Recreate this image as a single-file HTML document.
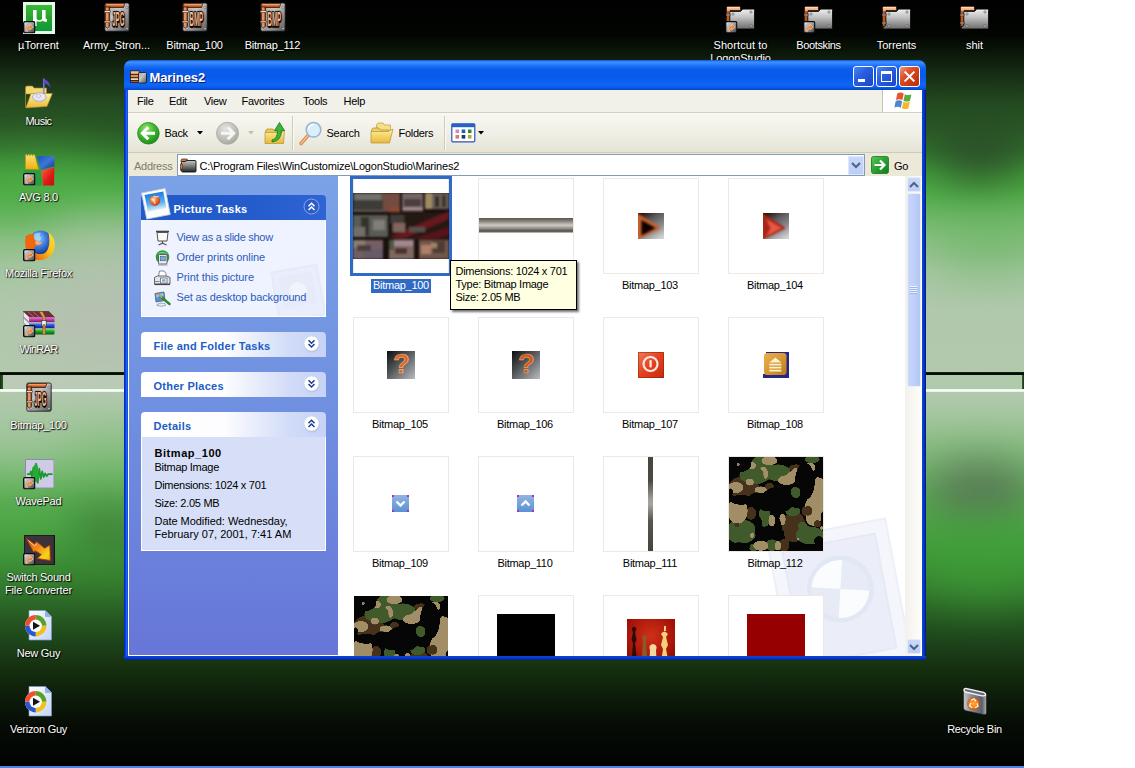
<!DOCTYPE html>
<html>
<head>
<meta charset="utf-8">
<title>Marines2</title>
<style>
*{box-sizing:border-box;margin:0;padding:0}
html,body{width:1135px;height:768px;overflow:hidden;background:#fff}
body{font-family:"Liberation Sans",sans-serif;font-size:11px;letter-spacing:-0.28px;color:#000;position:relative}
.abs{position:absolute}
#desk{position:absolute;left:0;top:0;width:1024px;height:768px;overflow:hidden;background:#000}
#wall{position:absolute;left:0;top:0;width:1024px;height:768px;
 background:linear-gradient(to bottom,#000 0,#020502 35px,#0f1f0d 60px,#1a3217 80px,#22481f 100px,#2a5a26 130px,#30702c 150px,#429e3b 175px,#52ae4a 195px,#6cb665 215px,#8cc086 240px,#a6c6a1 270px,#b1c8ac 310px,#b3c9ae 374px,#b3c9ae 392px,#a6c6a1 412px,#8ec088 440px,#74b86d 470px,#5aac52 500px,#4ba444 530px,#409639 555px,#347c2e 585px,#275c23 615px,#1d441a 642px,#16300f 668px,#0d1d0b 695px,#060c05 725px,#010201 768px)}
.blob{position:absolute;border-radius:50%;filter:blur(22px)}
/* desktop icons */
.di{position:absolute;width:78px;text-align:center;color:#fff;text-shadow:1px 1px 1px #000,0 0 2px rgba(0,0,0,.6);line-height:13px;white-space:nowrap}
.di svg{display:block;margin:0 auto}
/* window */
#win{position:absolute;left:124px;top:60px;width:802px;height:600px;border-radius:8px 8px 0 0;
 background:linear-gradient(to right,#0a22a8 0,#0c40e0 1.500px,#1c62f0 2.500px,#0a50d2 4px,#0a50d2 797px,#0a44d6 798.500px,#0836c4 800px,#03157e 802px)}
#title{position:absolute;left:0;top:0;width:802px;height:30px;border-radius:8px 8px 0 0;
 background:linear-gradient(to bottom,#0b54dc 0,#3f8fff 2px,#2f82fb 4px,#1468f2 7px,#0a5dec 10px,#085ae9 16px,#0a5ef0 20px,#0c66f8 24px,#0a60ee 27px,#064cd2 29px,#0544c0 30px)}
#title .tt{position:absolute;left:25.500px;top:10px;color:#fff;font-weight:bold;font-size:13px;letter-spacing:-0.1px;text-shadow:1px 1px 0 #0a1a6a}
.cb{position:absolute;top:6px;width:21px;height:21px;border:1px solid #fff;border-radius:3px;
 background:linear-gradient(135deg,#4a86f8 0,#2a5ee0 40%,#1a46c8 100%)}
#inner{position:absolute;left:4px;top:30px;width:794px;height:566px;background:#ece9d8;overflow:hidden}
#menu{position:absolute;left:0;top:0;width:794px;height:23px;background:#f2f1e9;border-bottom:1px solid #d4d0c0}
#menu span{position:absolute;top:5px}
#tool{position:absolute;left:0;top:23px;width:794px;height:40px;background:linear-gradient(to bottom,#f8f7f1 0,#f0efe6 55%,#e5e3d5 100%);border-bottom:1px solid #cfcbb8}
#addr{position:absolute;left:0;top:63px;width:794px;height:23px;background:#ece9d8}
#pane{position:absolute;left:1px;top:86px;width:209px;height:479px;background:linear-gradient(to bottom,#7ba2e7 0,#6f8fe0 50%,#6776d8 100%)}
#files{position:absolute;left:210px;top:86px;width:584px;height:480px;background:#fff;overflow:hidden}

.ph{position:absolute;left:12px;width:185px;height:25px;border-radius:4px 4px 0 0;background:linear-gradient(to right,#fff 0,#fdfdff 45%,#d2dcf8 80%,#c6d3f7 100%);color:#215dc6;font-weight:bold;letter-spacing:-0.1px}
.ph span{position:absolute;left:12.500px;top:7.500px}
.chev{position:absolute;left:162px;top:3px}
.pb{position:absolute;left:12px;width:185px;border:1px solid #fff;border-top:0}
.lnk{position:absolute;left:34.500px;color:#2a5abc;white-space:nowrap}
.dt{position:absolute;left:12.500px;white-space:nowrap}

.tb{position:absolute;width:96px;height:96px;border:1px solid #eae9e3;background:#fff}
.tl{position:absolute;width:118px;text-align:center;white-space:nowrap;line-height:13px}
.ph{letter-spacing:.25px}
</style>
</head>
<body>
<div id="desk">
 <div id="wall"></div>
 <div class="blob" style="left:-50px;top:150px;width:170px;height:70px;background:#4fae46;opacity:.5"></div>
 <div class="blob" style="left:40px;top:215px;width:120px;height:70px;background:#b4c6b0;opacity:.55"></div>
 <div class="blob" style="left:30px;top:270px;width:150px;height:100px;background:#b8bcb4;opacity:.6"></div>
 <div class="blob" style="left:935px;top:128px;width:90px;height:55px;background:#2a3f28;opacity:.75"></div>
 <div class="blob" style="left:930px;top:215px;width:120px;height:60px;background:#5cb054;opacity:.45"></div>
 <div class="blob" style="left:925px;top:462px;width:110px;height:55px;background:#566654;opacity:.8"></div>
 <div class="blob" style="left:915px;top:520px;width:140px;height:80px;background:#3fa238;opacity:.6"></div>
 <div class="blob" style="left:70px;top:505px;width:80px;height:50px;background:#2c5229;opacity:.45"></div>
 <div class="blob" style="left:-50px;top:395px;width:130px;height:70px;background:#b4cab0;opacity:.45"></div>
 <div class="abs" style="left:0;top:372px;width:1024px;height:3px;background:linear-gradient(to bottom,#1c301a,#020802 40%,#0a160a)"></div>
 <div class="abs" style="left:0;top:375px;width:1024px;height:14px;background:linear-gradient(to right,#bccbb8 0,#b9cab5 120px,#b1c9ad 930px,#b0caac 1024px)"></div>
 <div class="abs" style="left:0;top:389px;width:1024px;height:3px;background:linear-gradient(to bottom,#e8f6e6,#f8fff8,#e0f0de)"></div>
 <div class="abs" style="left:0;top:375px;width:3px;height:14px;background:linear-gradient(to right,#16300f,#2c5a24)"></div>
 <div class="abs" style="left:1021.500px;top:375px;width:2.500px;height:14px;background:linear-gradient(to right,#3a6a30,#16300f)"></div>
 <svg width="0" height="0" style="position:absolute">
<defs>
<linearGradient id="gMetal" x1="0" y1="0" x2="1" y2="1"><stop offset="0" stop-color="#a8a8a8"/><stop offset=".4" stop-color="#c6c6c6"/><stop offset=".7" stop-color="#8e8e8e"/><stop offset="1" stop-color="#585858"/></linearGradient>
<linearGradient id="gFold" x1="0" y1="0" x2="0" y2="1"><stop offset="0" stop-color="#eef2f4"/><stop offset=".45" stop-color="#bcbcbc"/><stop offset="1" stop-color="#6c6c6c"/></linearGradient>
<linearGradient id="gFoldD" x1="0" y1="0" x2="0" y2="1"><stop offset="0" stop-color="#c8c8c8"/><stop offset=".45" stop-color="#808080"/><stop offset="1" stop-color="#242424"/></linearGradient>
<linearGradient id="gPipe" x1="0" y1="0" x2="1" y2="0"><stop offset="0" stop-color="#c8602a"/><stop offset=".4" stop-color="#f4a878"/><stop offset="1" stop-color="#8a3810"/></linearGradient>
<linearGradient id="gPipeH" x1="0" y1="0" x2="0" y2="1"><stop offset="0" stop-color="#f8c8a0"/><stop offset=".45" stop-color="#e87a3a"/><stop offset="1" stop-color="#8a3810"/></linearGradient>
<linearGradient id="gSc" x1="0" y1="0" x2="1" y2="1"><stop offset="0" stop-color="#e4e4e4"/><stop offset=".5" stop-color="#9c9c9c"/><stop offset="1" stop-color="#4a4a4a"/></linearGradient>
<linearGradient id="gUt" x1="0" y1="0" x2="0" y2="1"><stop offset="0" stop-color="#3cb83a"/><stop offset=".5" stop-color="#25a42c"/><stop offset="1" stop-color="#0c9a3a"/></linearGradient>
<linearGradient id="gYF" x1="0" y1="0" x2="0" y2="1"><stop offset="0" stop-color="#fff0a0"/><stop offset="1" stop-color="#e8b83a"/></linearGradient>
<radialGradient id="gFx" cx=".4" cy=".35" r=".7"><stop offset="0" stop-color="#9ad0ff"/><stop offset=".5" stop-color="#3a7ad8"/><stop offset="1" stop-color="#142a88"/></radialGradient>
<linearGradient id="gCan" x1="0" y1="0" x2="1" y2="0"><stop offset="0" stop-color="#c8c8cc"/><stop offset=".35" stop-color="#8a8a92"/><stop offset=".8" stop-color="#5a5e68"/><stop offset="1" stop-color="#b0b0b0"/></linearGradient>
<radialGradient id="gRec" cx=".5" cy=".5" r=".5"><stop offset="0" stop-color="#ffb040"/><stop offset=".7" stop-color="#f07818"/><stop offset="1" stop-color="#c04808" stop-opacity=".6"/></radialGradient>
<linearGradient id="gPg" x1="0" y1="0" x2="1" y2="1"><stop offset="0" stop-color="#fff"/><stop offset="1" stop-color="#c4d4f4"/></linearGradient>

<symbol id="sc" viewBox="0 0 12 12"><rect x="0" y="0" width="12" height="12" rx="2" fill="#0c0c0c"/><rect x="1.300" y="1.300" width="9.400" height="9.400" rx=".8" fill="url(#gSc)"/><path d="M3 9.800C2.800 6.600 4.300 5 6.600 4.900V3L9.800 5.800 6.600 8.500V6.900C5.200 6.900 4.300 7.900 4.600 9.800Z" fill="#f57e2a" stroke="#ffe0c0" stroke-width=".5"/></symbol>

<symbol id="ifile" viewBox="0 0 26 30">
 <rect x=".8" y="1" width="24.400" height="28.200" rx="1.500" fill="url(#gMetal)" stroke="#101010" stroke-width=".8"/>
 <path d="M1.300 5.500V3.300Q1.300 1.500 3.300 1.500H20.800L19.500 5.500Z" fill="url(#gPipeH)" stroke="#2a1004" stroke-width=".7"/>
 <path d="M1.300 5H5.600V24.300L3.500 26 1.300 24.500Z" fill="url(#gPipe)" stroke="#2a1004" stroke-width=".7"/>
 <rect x=".3" y="8.800" width="5.900" height="1.700" fill="#fbe6d6" stroke="#2a1004" stroke-width=".5"/>
 <rect x=".3" y="19" width="5.900" height="1.700" fill="#fbe6d6" stroke="#2a1004" stroke-width=".5"/>
 <circle cx="23" cy="5.500" r="1" fill="#fafafa" stroke="#333" stroke-width=".5"/><circle cx="23" cy="26.500" r="1" fill="#fafafa" stroke="#333" stroke-width=".5"/><circle cx="5" cy="26.500" r="1" fill="#fafafa" stroke="#333" stroke-width=".5"/>
</symbol>

<symbol id="ifold" viewBox="0 0 29 23.500" preserveAspectRatio="none">
 <path d="M.5 21V1.800Q.5.400 2 .400H14.200L14.800 4.600H4V19Z" fill="url(#gPipeH)" stroke="#2a0e02" stroke-width=".7"/>
 <rect x="1.200" y=".900" width="12.600" height="1.300" fill="#ffd8b8"/>
 <rect x=".900" y="5" width="2.600" height="15" fill="#b45a22"/>
 <path d="M3.800 6.200Q3.800 5.400 4.600 5.400H14.500L16.700 3.100H27.400Q28.500 3.100 28.500 4.200V21.900Q28.500 23 27.400 23H2L.800 21.700 3.800 19.200Z" fill="url(#gFold)" stroke="#0c0c0c" stroke-width=".9"/>
 <rect x="0" y="8.200" width="4.100" height="1.600" fill="#fff4ea" stroke="#1a0c04" stroke-width=".5"/><rect x="0" y="16.200" width="4.100" height="1.600" fill="#fff4ea" stroke="#1a0c04" stroke-width=".5"/>
 <circle cx="7" cy="8" r="1.100" fill="#fff" stroke="#3a3a3a" stroke-width=".6"/><circle cx="25" cy="6" r="1.100" fill="#fff" stroke="#3a3a3a" stroke-width=".6"/><circle cx="25" cy="20" r="1.100" fill="#fff" stroke="#3a3a3a" stroke-width=".6"/><circle cx="7" cy="20" r="1.100" fill="#fff" stroke="#3a3a3a" stroke-width=".6"/>
</symbol>

<symbol id="iut" viewBox="0 0 32 32"><rect x="0" y="0" width="32" height="32" fill="#e4fbe8"/><rect x="3" y="3" width="26" height="26" fill="url(#gUt)"/><path d="M10 8h3.600v8.400q0 1.800 2.700 1.800t2.700-1.800V8h3.600v8.300q0 .9 1.400.7v2.700q-2.800.6-4.200-1q-1.400 1-3.300 1q-1.700 0-2.900-.6V24H10Z" fill="#fff"/></symbol>

<symbol id="imusic" viewBox="0 0 32 32">
 <path d="M2.500 29.500V9.500Q2.500 8 4 8H9.500L11 10H23.500V16H2.500Z" fill="#f2d872" stroke="#a88420" stroke-width=".6"/>
 <path d="M2.800 30L8 15.500H29.400L24 28.500Z" fill="url(#gYF)" stroke="#a88420" stroke-width=".6"/>
 <ellipse cx="16.300" cy="19" rx="6.800" ry="4.300" fill="#e6e6f6" stroke="#9a9ab8" stroke-width=".7"/><ellipse cx="15.500" cy="18" rx="2.200" ry="1.300" fill="#fff" stroke="#8a8aa8" stroke-width=".5"/>
 <path d="M20.800 .500V15" stroke="#8a7ae8" stroke-width="1.400"/><path d="M20.800 1Q27 3 27.500 10Q25 5.800 20.800 5.800Z" fill="#5848c8"/>
</symbol>

<symbol id="iavg" viewBox="0 0 32 32">
 <defs><linearGradient id="gAy" x1="0" y1="0" x2="0" y2="1"><stop offset="0" stop-color="#f8e070"/><stop offset="1" stop-color="#f4b010"/></linearGradient><linearGradient id="gAb" x1="0" y1="0" x2="1" y2="1"><stop offset="0" stop-color="#1c50c0"/><stop offset=".5" stop-color="#3a78d8"/><stop offset="1" stop-color="#16308a"/></linearGradient><linearGradient id="gAvr" x1="0" y1="0" x2="1" y2="1"><stop offset="0" stop-color="#f8683a"/><stop offset=".6" stop-color="#e01818"/><stop offset="1" stop-color="#c01010"/></linearGradient></defs>
 <path d="M2.500 15.200V.600h1.400v1h1v-1h1.600v1h1v-1h1.600v1h1v-1h1.500L15.600 15.200Z" fill="url(#gAy)" stroke="#c89010" stroke-width=".4"/>
 <path d="M14 2.200H31.400V12.200L18 15.900Z" fill="url(#gAb)"/>
 <path d="M1.800 15.900L17.400 16.400 19.500 31.400H1.800Z" fill="#2c9c3c"/>
 <path d="M18.200 16.800L31.400 13.300 31 31.400H20.200Z" fill="url(#gAvr)"/>
</symbol>

<symbol id="ifx" viewBox="0 0 32 32">
 <defs><linearGradient id="gFt" x1="1" y1="0" x2="0" y2="1"><stop offset="0" stop-color="#ffe040"/><stop offset=".45" stop-color="#fcc018"/><stop offset=".75" stop-color="#f07a10"/><stop offset="1" stop-color="#d83410"/></linearGradient></defs>
 <circle cx="17.500" cy="13.500" r="12" fill="url(#gFx)"/>
 <path d="M10 6q3-3 8-2q-2 1.500-1 3.500q2 2 0 4q-3 1-5.500-1q-2.500-2-1.500-4.500Z" fill="#a8dcff" opacity=".7"/>
 <path d="M25.500 3.500Q33 9 31.500 19Q29 29.500 18 31Q9 31.500 4.500 25.500L8.500 20.500Q13 27 21 24.500Q28.500 20 25.500 3.500Z" fill="url(#gFt)"/>
 <path d="M2.500 7.500Q6 4 11.500 5.500Q10 9 12.500 11.500L19 13.500Q17.500 16.500 13.500 16Q10 18.500 12 22L5 26Q1 18 2.500 7.500Z" fill="#f0680e"/>
 <path d="M12.500 11.500l6.500 2q-1.500 2.500-5 2.500q-2.500-1-1.500-4.500Z" fill="#ffc89a" opacity=".7"/>
</symbol>

<symbol id="irar" viewBox="0 0 32 24">
 <defs><linearGradient id="gR1" x1="0" y1="0" x2="0" y2="1"><stop offset="0" stop-color="#f07ad8"/><stop offset=".35" stop-color="#d848b8"/><stop offset="1" stop-color="#7a1c68"/></linearGradient><linearGradient id="gR2" x1="0" y1="0" x2="0" y2="1"><stop offset="0" stop-color="#5a88ff"/><stop offset=".4" stop-color="#2a50e0"/><stop offset="1" stop-color="#10208a"/></linearGradient><linearGradient id="gR3" x1="0" y1="0" x2="0" y2="1"><stop offset="0" stop-color="#50d858"/><stop offset=".4" stop-color="#1ea828"/><stop offset="1" stop-color="#0a5a12"/></linearGradient></defs>
 <path d="M.300 .500H25.800L31.500 6.300H6.500Z" fill="#6e3038" stroke="#2a1014" stroke-width=".5"/><path d="M5 .800L11 6M10 .800L16 6" stroke="#b86a60" stroke-width="1"/>
 <path d="M.300 .500L6.500 6.300V11L.300 5.700Z" fill="#f4e4ee" stroke="#4a3a44" stroke-width=".4"/>
 <rect x="6.500" y="6.300" width="25" height="4.800" fill="url(#gR1)"/>
 <path d="M.300 6.700L6.500 12.500V17L.300 11.800Z" fill="#e8e8f4" stroke="#3a3a4a" stroke-width=".4"/>
 <rect x="6.500" y="12.400" width="25" height="4.800" fill="url(#gR2)"/>
 <path d="M6.500 17.500l5.500 1V23.400L6.500 19Z" fill="#dde"/>
 <rect x="12" y="18.300" width="19.500" height="5.100" rx="1" fill="url(#gR3)"/>
 <path d="M16 .500h3.500l2.800 5.800V23.400H19.800V6.500Z" fill="#d89a50" stroke="#6a4010" stroke-width=".4"/>
 <rect x="18.800" y="9.500" width="4.400" height="5.500" fill="#f0f0f0" stroke="#222" stroke-width=".6"/><rect x="20" y="13" width="2.200" height="5" fill="#c07828"/>
</symbol>

<symbol id="iwave" viewBox="0 0 30 31" preserveAspectRatio="none">
 <rect x=".5" y=".5" width="29" height="30" fill="#cfcbe6" stroke="#8c88b0"/>
 <path d="M2 16h3l1-3 1 6 1.500-10 1.500 14 1.500-18 1.500 20 1.500-15 1.500 11 1.500-8 1.500 6 1.500-4 1.500 3 1.500-2H28" fill="none" stroke="#1a9a28" stroke-width="1.800" stroke-linejoin="round"/>
 <path d="M8 9l3-5 2 4 1 9-2 8-2-4-2-6Z" fill="#28a834"/>
</symbol>

<symbol id="isw" viewBox="0 0 31 30.400">
 <defs><linearGradient id="gSw" x1="0" y1="0" x2="1" y2="1"><stop offset="0" stop-color="#e8480c"/><stop offset=".45" stop-color="#f48a18"/><stop offset=".8" stop-color="#f8d41c"/><stop offset="1" stop-color="#f0b010"/></linearGradient></defs>
 <rect x="0" y="0" width="31" height="30.400" fill="#1c1418"/><rect x=".8" y=".8" width="29" height="28.400" fill="#3c333a"/>
 <path d="M2.300 3.400L10.200 9.100 12.800 6.800 20.600 13.300 25.800 10.200 26.300 25.500 13.300 23.400 17.400 19.500 11.700 15.900 9.600 16.900Z" fill="url(#gSw)" stroke="#b04008" stroke-width=".8"/>
 <path d="M4.500 5.500L10.500 11 12.800 9" stroke="#ffd8b0" stroke-width="1" fill="none"/>
</symbol>

<symbol id="iwmp" viewBox="0 0 30 31">
 <path d="M5 .500h16.500l6 6v23.500H5Z" fill="url(#gPg)" stroke="#7a94c8" stroke-width=".7"/><path d="M21.500 .500v6h6Z" fill="#8ab4e8" stroke="#7a94c8" stroke-width=".5"/>
 <circle cx="11.700" cy="15.800" r="10.700" fill="#f0f4fc"/>
 <path d="M11.700 15.800V5.100A10.700 10.700 0 0 1 22.400 15.800Z" fill="#5aa028"/><path d="M11.700 15.800H22.400A10.700 10.700 0 0 1 11.700 26.500Z" fill="#f0c020"/><path d="M11.700 15.800V26.500A10.700 10.700 0 0 1 1 15.800Z" fill="#2a56d0"/><path d="M11.700 15.800H1A10.700 10.700 0 0 1 11.700 5.100Z" fill="#ec5030"/>
 <circle cx="11.700" cy="15.800" r="6.200" fill="#f8fafe"/><path d="M9 11.800v8l7-4Z" fill="#141414"/>
</symbol>

<symbol id="ibin" viewBox="0 0 26 30">
 <path d="M1.500 4.500Q1 1.500 4 1.500L22 5.500Q24.500 6.500 24.500 9V26.500Q24.500 29 22 28.500L4 24.500Q1.500 24 1.500 21.500Z" fill="url(#gCan)" stroke="#1a1a1a" stroke-width=".6"/>
 <path d="M2 4Q2 2 4.500 2.300L21.500 6Q24 7 23.500 9Q22 10 19 9.300L4.500 6Q2 5.500 2 4Z" fill="#6a6e78" stroke="#f4f4f4" stroke-width="1.300"/>
 <circle cx="11.500" cy="17.500" r="6.500" fill="url(#gRec)"/>
 <path d="M9 14l3-1.500 2 2.500M15 17l1 3-3 1.500M10 21.500l-2.500-2 1.500-3" fill="none" stroke="#fff0d8" stroke-width="1.300"/>
</symbol>
</defs>
</svg>

 <div class="di" style="left:-0.5px;top:2px;letter-spacing:0.05px"><div style="position:relative;width:32px;height:32px;margin:0 auto 5px"><svg class="abs" style="left:0px;top:0px" width="32" height="32"><use href="#iut"/></svg><svg class="abs" style="left:.5px;top:19px" width="12.500" height="12.500"><use href="#sc"/></svg></div>µTorrent</div>
 <div class="di" style="left:77.5px;top:2px;letter-spacing:0px"><div style="position:relative;width:32px;height:32px;margin:0 auto 5px"><svg class="abs" style="left:3px;top:0px" width="26" height="30" viewBox="0 0 26 30"><use href="#ifile"/><text x="0" y="0" transform="translate(14.3,23.5) scale(.315,1)" text-anchor="middle" font-family="Liberation Sans,sans-serif" font-weight="bold" font-size="19.5" letter-spacing="0" fill="#f6b890" stroke="#2a1408" stroke-width="1.800" paint-order="stroke">JPG</text></svg></div>Army_Stron...</div>
 <div class="di" style="left:155.5px;top:2px;letter-spacing:-0.24px"><div style="position:relative;width:32px;height:32px;margin:0 auto 5px"><svg class="abs" style="left:3px;top:0px" width="26" height="30" viewBox="0 0 26 30"><use href="#ifile"/><text x="0" y="0" transform="translate(14.3,23.5) scale(.315,1)" text-anchor="middle" font-family="Liberation Sans,sans-serif" font-weight="bold" font-size="19.5" letter-spacing="0" fill="#f6b890" stroke="#2a1408" stroke-width="1.800" paint-order="stroke">BMP</text></svg></div>Bitmap_100</div>
 <div class="di" style="left:233.5px;top:2px;letter-spacing:-0.24px"><div style="position:relative;width:32px;height:32px;margin:0 auto 5px"><svg class="abs" style="left:3px;top:0px" width="26" height="30" viewBox="0 0 26 30"><use href="#ifile"/><text x="0" y="0" transform="translate(14.3,23.5) scale(.315,1)" text-anchor="middle" font-family="Liberation Sans,sans-serif" font-weight="bold" font-size="19.5" letter-spacing="0" fill="#f6b890" stroke="#2a1408" stroke-width="1.800" paint-order="stroke">BMP</text></svg></div>Bitmap_112</div>
 <div class="di" style="left:701.5px;top:2px;letter-spacing:0.07px"><div style="position:relative;width:32px;height:32px;margin:0 auto 5px"><svg class="abs" style="left:1px;top:3.500px" width="29" height="23.500"><use href="#ifold"/></svg><svg class="abs" style="left:.5px;top:19px" width="12.500" height="12.500"><use href="#sc"/></svg></div>Shortcut to<br><span style="letter-spacing:-0.1px">LogonStudio</span></div>
 <div class="di" style="left:779.5px;top:2px;letter-spacing:-0.37px"><div style="position:relative;width:32px;height:32px;margin:0 auto 5px"><svg class="abs" style="left:1px;top:3.500px" width="29" height="23.500"><use href="#ifold"/></svg><svg class="abs" style="left:.5px;top:19px" width="12.500" height="12.500"><use href="#sc"/></svg></div>Bootskins</div>
 <div class="di" style="left:857.5px;top:2px;letter-spacing:-0.04px"><div style="position:relative;width:32px;height:32px;margin:0 auto 5px"><svg class="abs" style="left:1px;top:3.500px" width="29" height="23.500"><use href="#ifold"/></svg></div>Torrents</div>
 <div class="di" style="left:935.5px;top:2px;letter-spacing:0px"><div style="position:relative;width:32px;height:32px;margin:0 auto 5px"><svg class="abs" style="left:1px;top:3.500px" width="29" height="23.500"><use href="#ifold"/></svg></div>shit</div>
 <div class="di" style="left:-0.5px;top:78px;letter-spacing:-0.54px"><div style="position:relative;width:32px;height:32px;margin:0 auto 5px"><svg class="abs" style="left:0px;top:0px" width="32" height="32"><use href="#imusic"/></svg></div>Music</div>
 <div class="di" style="left:-0.5px;top:154px;letter-spacing:-0.26px"><div style="position:relative;width:32px;height:32px;margin:0 auto 5px"><svg class="abs" style="left:0px;top:0px" width="32" height="32"><use href="#iavg"/></svg><svg class="abs" style="left:.5px;top:19px" width="12.500" height="12.500"><use href="#sc"/></svg></div>AVG 8.0</div>
 <div class="di" style="left:-0.5px;top:230px;letter-spacing:-0.26px"><div style="position:relative;width:32px;height:32px;margin:0 auto 5px"><svg class="abs" style="left:0px;top:-1px" width="32" height="32"><use href="#ifx"/></svg><svg class="abs" style="left:.5px;top:19px" width="12.500" height="12.500"><use href="#sc"/></svg></div>Mozilla Firefox</div>
 <div class="di" style="left:-0.5px;top:306px;letter-spacing:-0.7px"><div style="position:relative;width:32px;height:32px;margin:0 auto 5px"><svg class="abs" style="left:.5px;top:4.500px" width="32" height="24"><use href="#irar"/></svg><svg class="abs" style="left:.5px;top:19px" width="12.500" height="12.500"><use href="#sc"/></svg></div>WinRAR</div>
 <div class="di" style="left:-0.5px;top:382px;letter-spacing:-0.24px"><div style="position:relative;width:32px;height:32px;margin:0 auto 5px"><svg class="abs" style="left:3px;top:0px" width="26" height="30" viewBox="0 0 26 30"><use href="#ifile"/><text x="0" y="0" transform="translate(14.3,23.5) scale(.315,1)" text-anchor="middle" font-family="Liberation Sans,sans-serif" font-weight="bold" font-size="19.5" letter-spacing="0" fill="#f6b890" stroke="#2a1408" stroke-width="1.800" paint-order="stroke">JPG</text></svg></div>Bitmap_100</div>
 <div class="di" style="left:-0.5px;top:458px;letter-spacing:-0.19px"><div style="position:relative;width:32px;height:32px;margin:0 auto 5px"><svg class="abs" style="left:2px;top:1px" width="29.500" height="29.500"><use href="#iwave"/></svg><svg class="abs" style="left:.5px;top:19px" width="12.500" height="12.500"><use href="#sc"/></svg></div>WavePad</div>
 <div class="di" style="left:-0.5px;top:534px;letter-spacing:-0.275px"><div style="position:relative;width:32px;height:32px;margin:0 auto 5px"><svg class="abs" style="left:1px;top:1px" width="31" height="30.400"><use href="#isw"/></svg><svg class="abs" style="left:.5px;top:19px" width="12.500" height="12.500"><use href="#sc"/></svg></div>Switch Sound<br><span style="letter-spacing:-0.15px">File Converter</span></div>
 <div class="di" style="left:-0.5px;top:610px;letter-spacing:-0.26px"><div style="position:relative;width:32px;height:32px;margin:0 auto 5px"><svg class="abs" style="left:1px;top:0px" width="30" height="31"><use href="#iwmp"/></svg></div>New Guy</div>
 <div class="di" style="left:-0.5px;top:686px;letter-spacing:-0.26px"><div style="position:relative;width:32px;height:32px;margin:0 auto 5px"><svg class="abs" style="left:1px;top:0px" width="30" height="31"><use href="#iwmp"/></svg></div>Verizon Guy</div>
 <div class="di" style="left:935.5px;top:686px;letter-spacing:-0.31px"><div style="position:relative;width:32px;height:32px;margin:0 auto 5px"><svg class="abs" style="left:3px;top:0px" width="26" height="30.500"><use href="#ibin"/></svg></div>Recycle Bin</div>
 <div id="win">
  <div id="title">
   <svg class="abs" style="left:6px;top:8.500px" width="17" height="16" viewBox="0 0 17 16">
    <rect x="0" y="1.500" width="9.500" height="12.500" rx="1" fill="#2a160c"/>
    <rect x=".8" y="2.200" width="8" height="2.600" fill="#f0c29a"/><rect x=".8" y="5.800" width="8" height="2.400" fill="#ec8a4a"/><rect x=".8" y="9.200" width="8" height="1.800" fill="#e8d8c4"/><rect x=".8" y="11.800" width="8" height="1.400" fill="#b05a28"/>
    <rect x="8.500" y="3.500" width="8" height="10.500" rx="1" fill="url(#gMetal)" stroke="#181818" stroke-width=".8"/>
   </svg>
   <div class="tt">Marines2</div>
   <div class="cb" style="left:729px"><div class="abs" style="left:4px;top:12px;width:7px;height:3px;background:#fff"></div></div>
   <div class="cb" style="left:752px"><div class="abs" style="left:4px;top:4px;width:11px;height:11px;border:1px solid #fff;border-top-width:3px"></div></div>
   <div class="cb" style="left:775px;background:linear-gradient(135deg,#f09878 0,#e0502a 35%,#c83a14 70%,#b83010 100%)"><svg class="abs" style="left:0;top:0" width="19" height="19" viewBox="0 0 19 19"><path d="M5.300 5.300l8.400 8.400M13.700 5.300l-8.400 8.400" stroke="#fff" stroke-width="2" stroke-linecap="square"/></svg></div>
  </div>
  <div class="abs" style="left:0;top:596px;width:802px;height:4px;background:linear-gradient(to bottom,#0a48dc 0,#0838c8 2px,#041e92 4px)"></div>
  <div id="inner">
   <div id="menu"><span style="left:9px">File</span><span style="left:41px">Edit</span><span style="left:76px">View</span><span style="left:113.500px">Favorites</span><span style="left:175px">Tools</span><span style="left:215.500px">Help</span>
    <div class="abs" style="left:754px;top:0;width:40px;height:22px;background:#fff;border-left:1px solid #c8c4b4"></div>
    <svg class="abs" style="left:764.500px;top:1px" width="23" height="20" viewBox="0 0 20 18">
     <path d="M3.500 2.200Q6.500 .6 9.300 2.400L8.100 8.200Q5.300 6.600 2.300 8Z" fill="#e8542c"/>
     <path d="M10.300 2.900Q13.200 4.400 16.200 2.900L15 8.700Q12 10.200 9.100 8.700Z" fill="#5aac3a"/>
     <path d="M2.100 9Q5.100 7.600 7.900 9.200L6.700 15Q3.900 13.400.9 14.800Z" fill="#4a86d8"/>
     <path d="M8.900 9.700Q11.800 11.200 14.800 9.700L13.600 15.500Q10.600 17 7.700 15.500Z" fill="#f4b82a"/>
    </svg></div>
   <div id="tool"><svg class="abs" style="left:8px;top:8px" width="25" height="25" viewBox="0 0 25 25">
     <defs><radialGradient id="gBk" cx=".4" cy=".3" r=".75"><stop offset="0" stop-color="#9ae878"/><stop offset=".45" stop-color="#46bc32"/><stop offset="1" stop-color="#1a861a"/></radialGradient>
     <radialGradient id="gFw" cx=".4" cy=".3" r=".75"><stop offset="0" stop-color="#e4e4e0"/><stop offset=".6" stop-color="#c0c0ba"/><stop offset="1" stop-color="#a4a49c"/></radialGradient></defs>
     <circle cx="12.400" cy="12.300" r="10.800" fill="url(#gBk)" stroke="#2a8a24" stroke-width=".8"/>
     <path d="M12.300 6.300L6.300 12.300l6 6M7 12.300H19" fill="none" stroke="#fff" stroke-width="3" stroke-linejoin="miter"/>
    </svg>
    <span class="abs" style="left:36.500px;top:14px">Back</span>
    <svg class="abs" style="left:69px;top:18px" width="6" height="4"><path d="M0 0h6L3 3.500Z" fill="#000"/></svg>
    <svg class="abs" style="left:86.500px;top:8px" width="25" height="25" viewBox="0 0 25 25">
     <circle cx="12.500" cy="12.300" r="11" fill="url(#gFw)" stroke="#a8a8a0" stroke-width=".8"/>
     <path d="M12.700 6.300l6 6-6 6M18 12.300H6" fill="none" stroke="#f6f6f2" stroke-width="3" stroke-linejoin="miter"/>
    </svg>
    <svg class="abs" style="left:120px;top:18px" width="6" height="4"><path d="M0 0h6L3 3.500Z" fill="#c4c0b0"/></svg>
    <svg class="abs" style="left:136px;top:7px" width="22" height="25" viewBox="0 0 22 25">
     <path d="M1.500 11l1.500-2h6l1.500 2h9v3H1.500Z" fill="#e8c85a" stroke="#b08a20" stroke-width=".7"/>
     <path d="M1 23.500V12.500h17l2.500-2.500-1 13.500Z" fill="url(#gYF)" stroke="#b8902c" stroke-width=".7"/>
     <path d="M8 20Q13.500 19 13.500 10.500H10.500L15.500 2.500 20.500 10.500H17.500Q17.500 21 8 22Z" fill="#3cb43a" stroke="#1a7a1c" stroke-width=".8"/>
    </svg>
    <div class="abs" style="left:164px;top:3px;width:1px;height:34px;background:#cfcbb8"></div><div class="abs" style="left:165px;top:3px;width:1px;height:34px;background:#fbfaf4"></div>
    <svg class="abs" style="left:170px;top:8px" width="25" height="25" viewBox="0 0 25 25">
     <path d="M3 22.500l8-9" stroke="#d88a4a" stroke-width="3.400" stroke-linecap="round"/><path d="M3 22.500l8-9" stroke="#f4c49a" stroke-width="1.200" stroke-linecap="round"/>
     <circle cx="15.500" cy="8.800" r="7.300" fill="#d8f0fc" stroke="#9ab4d0" stroke-width="1.500"/><path d="M10.500 8.500a5 5 0 0 1 5-5" stroke="#fff" stroke-width="1.600" fill="none"/>
    </svg>
    <span class="abs" style="left:198.500px;top:14px">Search</span>
    <svg class="abs" style="left:242px;top:9px" width="25" height="22" viewBox="0 0 25 22">
     <path d="M6.500 3l1.500-2h5l1.500 2h6v14h-14Z" fill="#f4e08a" stroke="#c09a30" stroke-width=".7"/>
     <path d="M1.500 8l1.500-2h6l1.500 2h8.500v3H1.500Z" fill="#ecd06a" stroke="#b08a20" stroke-width=".7"/>
     <path d="M1 21V9.500h17l5-2.500-3.500 14Z" fill="url(#gYF)" stroke="#b8902c" stroke-width=".7"/>
    </svg>
    <span class="abs" style="left:270.500px;top:14px">Folders</span>
    <div class="abs" style="left:316px;top:3px;width:1px;height:34px;background:#cfcbb8"></div><div class="abs" style="left:317px;top:3px;width:1px;height:34px;background:#fbfaf4"></div>
    <svg class="abs" style="left:323px;top:10px" width="25" height="20" viewBox="0 0 25 20">
     <rect x=".8" y=".8" width="23" height="18" rx="1" fill="#fff" stroke="#2a56b8" stroke-width="1.200"/><rect x=".8" y=".8" width="23" height="3.400" fill="#2a5ec8"/>
     <rect x="4.500" y="6.500" width="3.600" height="3.600" fill="#c88ac0"/><rect x="10.700" y="6.500" width="3.600" height="3.600" fill="#2a5ab8"/><rect x="16.900" y="6.500" width="3.600" height="3.600" fill="#2a8a3a"/>
     <rect x="4.500" y="12" width="3.600" height="3.600" fill="#e07a50"/><rect x="10.700" y="12" width="3.600" height="3.600" fill="#16357a"/><rect x="16.900" y="12" width="3.600" height="3.600" fill="#b8a838"/>
    </svg>
    <svg class="abs" style="left:350px;top:18px" width="6" height="4"><path d="M0 0h6L3 3.500Z" fill="#000"/></svg></div>
   <div id="addr"><span class="abs" style="left:6px;top:6.500px;color:#7f7c70">Address</span>
    <div class="abs" style="left:49px;top:1px;width:688px;height:22px;background:#fff;border:1px solid #7f9db9"></div>
    <svg class="abs" style="left:52px;top:4.500px" width="17" height="15" viewBox="0 0 17 15">
     <path d="M1 2.500Q1 1 2.500 1H6.500Q7.500 1 7.500 2V4H1Z" fill="#e87a3a" stroke="#3a1808" stroke-width=".7"/>
     <path d="M1.500 4.500Q1.500 3.500 2.500 3.500H5L7 2.500H15Q16 2.500 16 3.500V13Q16 14 15 14H2.500L.8 12.500Z" fill="url(#gFoldD)" stroke="#101010" stroke-width=".9"/>
     <rect x=".3" y="6" width="2" height="5" fill="#e07030" stroke="#2a1a10" stroke-width=".4"/>
    </svg>
    <span class="abs" style="left:71.500px;top:7px;letter-spacing:-.2px">C:\Program Files\WinCustomize\LogonStudio\Marines2</span>
    <div class="abs" style="left:720px;top:3px;width:16px;height:19px;background:linear-gradient(to bottom,#cad8fb,#bccdf8);border:1px solid #dfe8fd"></div>
    <svg class="abs" style="left:723px;top:9px" width="10" height="7" viewBox="0 0 10 7"><path d="M1 1l4 4 4-4" fill="none" stroke="#4d6185" stroke-width="2"/></svg>
    <svg class="abs" style="left:743px;top:3px" width="18" height="18" viewBox="0 0 18 18">
     <defs><linearGradient id="gGo" x1="0" y1="0" x2="1" y2="1"><stop offset="0" stop-color="#5ac85a"/><stop offset=".5" stop-color="#2aa032"/><stop offset="1" stop-color="#127a20"/></linearGradient></defs>
     <rect x=".5" y=".5" width="17" height="17" rx="2" fill="url(#gGo)" stroke="#2a8a30"/>
     <path d="M3.500 9h9.500M9 4.500l4.500 4.500-4.500 4.500" fill="none" stroke="#fff" stroke-width="2.200"/>
    </svg>
    <span class="abs" style="left:766px;top:6.500px">Go</span></div>
   <div class="abs" style="left:0;top:86px;width:794px;height:480px;background:#fff"></div>
   <div id="pane">
    <div class="ph" style="top:19px;background:linear-gradient(to right,#2259c8 0,#255ccc 60%,#2e64d4 100%);color:#fff"><span style="left:32.500px">Picture Tasks</span><svg class="chev" width="17" height="17" viewBox="0 0 17 17"><circle cx="8.500" cy="8.500" r="7.500" fill="#2a5ccc" stroke="#8aa8ec" stroke-width="1"/><path d="M5.500 8.200l3-3 3 3M5.500 12l3-3 3 3" fill="none" stroke="#fff" stroke-width="1.500"/></svg></div>
    <div class="pb" style="top:44px;height:97px;background:#eff3ff;overflow:hidden">
     <svg class="abs" style="left:127px;top:42px" width="60" height="60" viewBox="0 0 60 60" opacity=".55"><g transform="rotate(-10 30 30)"><rect x="6" y="6" width="46" height="50" fill="#e6ebfa" stroke="#dde3f6" stroke-width="2"/><rect x="12" y="12" width="34" height="32" fill="#dfe5f7"/><circle cx="29" cy="29" r="9" fill="#f3f5fd"/></g></svg>
     <svg class="abs" style="left:12px;top:10px" width="17" height="16" viewBox="0 0 17 16"><path d="M2 1.500h13" stroke="#444" stroke-width="1.600"/><path d="M3 2.500h11l-1 8.500H4Z" fill="#fafafa" stroke="#555" stroke-width="1"/><path d="M8.500 11v2.500M4.500 15l4-1.800 4 1.800" fill="none" stroke="#555" stroke-width="1.300"/></svg>
     <svg class="abs" style="left:12px;top:30px" width="17" height="16" viewBox="0 0 17 16"><circle cx="8.500" cy="7" r="6.800" fill="#2f9a3c"/><path d="M3 4Q8.500 0 14 4Q8.500 2.500 3 4Z" fill="#8ad890"/><rect x="4.500" y="4.500" width="8.500" height="9.500" rx="1" fill="#e8eef8" stroke="#555" stroke-width=".9"/><rect x="6.200" y="6.200" width="5" height="4.600" fill="#7aa8e0" stroke="#446" stroke-width=".5"/><path d="M4 15h9.500" stroke="#999" stroke-width="1"/></svg>
     <svg class="abs" style="left:11px;top:50px" width="18" height="16" viewBox="0 0 18 16"><path d="M5.500 6.500l1-5.500h4.500l2 2.500v3.500Z" fill="#fff" stroke="#667" stroke-width=".8"/><path d="M1.500 7.500l3-1.500h9l3.500 1.500v6.500h-15.500Z" fill="#e4e6ee" stroke="#555" stroke-width=".9"/><rect x="7.500" y="8" width="6.500" height="5" fill="#fff" stroke="#555" stroke-width=".7"/><rect x="9" y="9.300" width="3.500" height="2.400" fill="#7aa8e0"/><path d="M1.500 11.500h5" stroke="#888" stroke-width="1"/><path d="M1.500 14.500h15.500" stroke="#444" stroke-width="1.200"/></svg>
     <svg class="abs" style="left:11px;top:71px" width="18" height="16" viewBox="0 0 18 16"><path d="M2 2.500l9-1.500 1 8.500-9 1.500Z" fill="#4a90e0" stroke="#667" stroke-width=".9"/><path d="M3.200 3.500l6.800-1.200.6 3Q6 4.500 3.600 7Z" fill="#9ad0f8"/><path d="M4 13.500q4-2.500 8-1l.5 2q-4.500 1.500-8.500 0Z" fill="#e8ecf4" stroke="#889" stroke-width=".7"/><path d="M7 5l9.500 8" stroke="#2a8a2a" stroke-width="2.400" stroke-linecap="round"/><path d="M5.500 3.500l3 2.500" stroke="#c8a040" stroke-width="2" stroke-linecap="round"/></svg>
     <span class="lnk" style="top:11px">View as a slide show</span>
     <span class="lnk" style="top:31px;letter-spacing:-.1px">Order prints online</span>
     <span class="lnk" style="top:51px;letter-spacing:-.08px">Print this picture</span>
     <span class="lnk" style="top:71px;letter-spacing:-.14px">Set as desktop background</span>
    </div>
    <svg class="abs" style="left:12px;top:11px" width="31" height="33" viewBox="0 0 31 33"><defs><linearGradient id="gSky" x1="0" y1="0" x2="0" y2="1"><stop offset="0" stop-color="#1e7ae0"/><stop offset=".6" stop-color="#5ab0f0"/><stop offset="1" stop-color="#d8ecf8"/></linearGradient><radialGradient id="gBall" cx=".4" cy=".35" r=".7"><stop offset="0" stop-color="#fff4e0"/><stop offset=".35" stop-color="#f08a40"/><stop offset="1" stop-color="#c82a18"/></radialGradient></defs>
     <g transform="rotate(-11 15 17)"><rect x="3" y="3.500" width="24" height="26.500" fill="#fbfcfe" stroke="#c8d0e0" stroke-width=".8"/><rect x="5.500" y="6" width="19" height="17" fill="url(#gSky)"/><circle cx="14.500" cy="13.500" r="5.200" fill="url(#gBall)"/><path d="M11.500 11.500q3 1.500 2.500 5M14.500 9q3 2 4.500 1" stroke="#fff" stroke-width="1" fill="none" opacity=".8"/></g></svg>
    <div class="ph" style="top:156px"><span>File and Folder Tasks</span><svg class="chev" width="18" height="18" viewBox="0 0 18 18"><circle cx="9" cy="9.500" r="8" fill="#aab8dc" opacity=".55"/><circle cx="8.500" cy="8.500" r="7.500" fill="#fff" stroke="#cdd6ee" stroke-width=".8"/><path d="M5.500 5.200l3 3 3-3M5.500 9l3 3 3-3" fill="none" stroke="#1a3c96" stroke-width="1.500"/></svg></div>
    <div class="ph" style="top:196px"><span>Other Places</span><svg class="chev" width="18" height="18" viewBox="0 0 18 18"><circle cx="9" cy="9.500" r="8" fill="#aab8dc" opacity=".55"/><circle cx="8.500" cy="8.500" r="7.500" fill="#fff" stroke="#cdd6ee" stroke-width=".8"/><path d="M5.500 5.200l3 3 3-3M5.500 9l3 3 3-3" fill="none" stroke="#1a3c96" stroke-width="1.500"/></svg></div>
    <div class="ph" style="top:236px"><span>Details</span><svg class="chev" width="18" height="18" viewBox="0 0 18 18"><circle cx="9" cy="9.500" r="8" fill="#aab8dc" opacity=".55"/><circle cx="8.500" cy="8.500" r="7.500" fill="#fff" stroke="#cdd6ee" stroke-width=".8"/><path d="M5.500 8.200l3-3 3 3M5.500 12l3-3 3 3" fill="none" stroke="#1a3c96" stroke-width="1.500"/></svg></div>
    <div class="pb" style="top:261px;height:114px;background:#d6dff7">
     <span class="dt" style="top:10px;font-weight:bold;letter-spacing:.55px">Bitmap_100</span>
     <span class="dt" style="top:24px">Bitmap Image</span>
     <span class="dt" style="top:42px">Dimensions: 1024 x 701</span>
     <span class="dt" style="top:60px">Size: 2.05 MB</span>
     <span class="dt" style="top:78px;letter-spacing:-.04px">Date Modified: Wednesday,</span>
     <span class="dt" style="top:91px;letter-spacing:.02px">February 07, 2001, 7:41 AM</span>
    </div></div>
   <div id="files"><div class="abs" style="left:428px;top:364px;width:122px;height:170px;transform-origin:0 0;transform:rotate(-10.700deg);background:#f2f4fb;border:2px solid #e9edf8;opacity:.8">
<div class="abs" style="left:11px;top:11px;width:96px;height:118px;background:#e7ebf7;border:2px solid #dfe5f4"></div>
<svg class="abs" style="left:28px;top:26px" width="68" height="68" viewBox="0 0 68 68"><circle cx="34" cy="34" r="31" fill="#e2e7f5" stroke="#dbe2f2" stroke-width="5"/><path d="M34 34V5A29 29 0 0 0 5 34ZM34 34V63A29 29 0 0 0 63 34Z" fill="#fbfcfe" transform="rotate(14 34 34)"/></svg>
</div><div class="tb" style="left:15px;top:2px"><div class="abs" style="left:-1px;top:14px"><svg width="96" height="66" viewBox="0 0 96 66" style="display:block"><defs><filter id="cl" x="-3%" y="-3%" width="106%" height="106%"><feGaussianBlur stdDeviation=".9"/></filter></defs><rect width="96" height="66" fill="#1c1210"/><g filter="url(#cl)">
<rect x="0" y="0" width="47" height="19" fill="#6e6a62"/><rect x="30" y="0" width="17" height="19" fill="#8a5c50"/><rect x="0" y="7" width="30" height="10" fill="#4a4842"/><rect x="36" y="14" width="11" height="5" fill="#a85a40"/><rect x="2" y="1" width="26" height="6" fill="#888c84"/>
<rect x="49" y="0" width="21" height="18" fill="#8c7c7e"/><rect x="51" y="6" width="17" height="8" fill="#5c4c4c"/><rect x="50" y="14" width="20" height="4" fill="#c0a8a8"/>
<rect x="72" y="0" width="7" height="16" fill="#c4aa7c"/><rect x="79" y="0" width="17" height="16" fill="#7e746a"/><rect x="82" y="3" width="4" height="11" fill="#3a3028"/><rect x="89" y="2" width="4" height="12" fill="#4a3c30"/>
<rect x="0" y="22" width="35" height="22" fill="#6c7066"/><rect x="8" y="24" width="8" height="19" fill="#3a3c36"/><rect x="20" y="27" width="12" height="10" fill="#9a9c94"/><rect x="0" y="34" width="12" height="10" fill="#8c8880"/>
<rect x="37" y="20" width="59" height="26" fill="#2c1a18"/><path d="M37 44L96 18V26L50 46Z" fill="#7a1c20"/><path d="M60 46L96 34V42L80 46Z" fill="#6a181c"/><rect x="40" y="30" width="12" height="9" fill="#9c7c70"/><rect x="37" y="22" width="14" height="8" fill="#4c4844"/><rect x="56" y="34" width="16" height="5" fill="#6a605c"/>
<rect x="0" y="47" width="30" height="19" fill="#8c747c"/><rect x="10" y="56" width="20" height="10" fill="#7c7080"/><rect x="0" y="47" width="12" height="8" fill="#a89c8c"/><rect x="4" y="52" width="14" height="6" fill="#5c4c48"/>
<rect x="36" y="47" width="25" height="19" fill="#9c8078"/><rect x="38" y="47" width="22" height="6" fill="#c4a8b0"/><rect x="42" y="55" width="12" height="6" fill="#5a3c34"/><rect x="36" y="47" width="5" height="10" fill="#5a6a50"/>
<rect x="66" y="47" width="30" height="19" fill="#8a6a5a"/><rect x="68" y="52" width="10" height="9" fill="#d49c80"/><rect x="80" y="48" width="12" height="12" fill="#5c4a40"/><rect x="78" y="50" width="6" height="5" fill="#c8a078"/>
</g><rect width="96" height="66" fill="#140c0a" opacity=".2"/></svg></div></div>
<div class="tb" style="left:140px;top:2px"><div class="abs" style="left:0px;top:39px"><div style="width:94px;height:15px;background:linear-gradient(to bottom,#5a564e 0,#7e7a72 18%,#cfccc8 48%,#8a867e 72%,#4e4a42 88%,#d8d6d0 100%)"></div></div></div>
<div class="tb" style="left:265px;top:2px"><div class="abs" style="left:34px;top:34px"><svg width="26" height="26" viewBox="0 0 26 26" style="display:block"><defs><linearGradient id="gAr" x1=".2" y1="0" x2=".8" y2="1"><stop offset="0" stop-color="#2a160c"/><stop offset=".3" stop-color="#5c5a5c"/><stop offset=".65" stop-color="#8c8a8c"/><stop offset="1" stop-color="#d0d0d2"/></linearGradient><filter id="fA" x="-10%" y="-10%" width="120%" height="120%"><feGaussianBlur stdDeviation="1.100"/></filter><clipPath id="cA"><rect width="26" height="26"/></clipPath></defs><rect width="26" height="26" fill="url(#gAr)"/><g clip-path="url(#cA)"><path d="M-1 0L23 15 -1 27Z" fill="#c8602c" filter="url(#fA)"/><path d="M3.500 7L17.500 15 3.500 22.500Z" fill="#0a0600" filter="url(#fA)"/></g></svg></div></div>
<div class="tl" style="left:253px;top:102.5px">Bitmap_103</div>
<div class="tb" style="left:390px;top:2px"><div class="abs" style="left:34px;top:34px"><svg width="26" height="26" viewBox="0 0 26 26" style="display:block"><rect width="26" height="26" fill="url(#gAr)"/><g clip-path="url(#cA)"><path d="M-1 0L23 15 -1 27Z" fill="#a82818" filter="url(#fA)"/><path d="M3 6L19 15 3 23.500 7.500 15Z" fill="#e85844" filter="url(#fA)"/></g></svg></div></div>
<div class="tl" style="left:378px;top:102.5px">Bitmap_104</div>
<div class="tb" style="left:15px;top:141px"><div class="abs" style="left:33px;top:33px"><svg width="28" height="28" viewBox="0 0 28 28" style="display:block"><defs><linearGradient id="gQ" x1="0" y1="0" x2="1" y2="1"><stop offset="0" stop-color="#0e0e0e"/><stop offset=".4" stop-color="#4c5052"/><stop offset="1" stop-color="#b8bcbe"/></linearGradient></defs><rect width="28" height="28" fill="url(#gQ)"/><text x="14.500" y="22.300" text-anchor="middle" font-family="Liberation Sans,sans-serif" font-weight="bold" font-size="27" fill="#d8682a" stroke="#f8b078" stroke-width=".7" letter-spacing="0">?</text></svg></div></div>
<div class="tl" style="left:3px;top:241.5px">Bitmap_105</div>
<div class="tb" style="left:140px;top:141px"><div class="abs" style="left:33px;top:33px"><svg width="28" height="28" viewBox="0 0 28 28" style="display:block"><rect width="28" height="28" fill="url(#gQ)"/><text x="14.500" y="22.300" text-anchor="middle" font-family="Liberation Sans,sans-serif" font-weight="bold" font-size="27" fill="#c85a20" stroke="#f0a068" stroke-width=".7" letter-spacing="0">?</text></svg></div></div>
<div class="tl" style="left:128px;top:241.5px">Bitmap_106</div>
<div class="tb" style="left:265px;top:141px"><div class="abs" style="left:34px;top:34px"><svg width="26" height="26" viewBox="0 0 26 26" style="display:block"><defs><linearGradient id="gPw" x1="0" y1="0" x2="1" y2="1"><stop offset="0" stop-color="#f07a5a"/><stop offset=".5" stop-color="#e4401e"/><stop offset="1" stop-color="#c42c0c"/></linearGradient></defs><rect width="26" height="26" rx="1.500" fill="url(#gPw)" stroke="#8a1c08" stroke-width="1"/><circle cx="12.500" cy="12" r="7" fill="none" stroke="#fbe8dc" stroke-width="2.200"/><rect x="11.400" y="8" width="2.400" height="7.500" rx="1" fill="#fbe8dc"/></svg></div></div>
<div class="tl" style="left:253px;top:241.5px">Bitmap_107</div>
<div class="tb" style="left:390px;top:141px"><div class="abs" style="left:34px;top:34px"><svg width="26" height="26" viewBox="0 0 26 26" style="display:block"><defs><linearGradient id="gEj" x1="0" y1="0" x2="1" y2="1"><stop offset="0" stop-color="#e8b050"/><stop offset=".5" stop-color="#d89830"/><stop offset="1" stop-color="#b87c18"/></linearGradient></defs><rect width="26" height="26" fill="#26268a"/><path d="M0 23V0H23Q23 0 23 0" fill="none"/><rect x="0" y="0" width="3" height="22" fill="#fff"/><rect x="1" y="1" width="22.500" height="22" rx="3" fill="url(#gEj)"/><path d="M12.300 5.500l6 5h-12Z" fill="#fbf0d0"/><path d="M6.300 12.700h12M6.300 15.700h12M6.300 18.700h12" stroke="#fbf0d0" stroke-width="1.700"/></svg></div></div>
<div class="tl" style="left:378px;top:241.5px">Bitmap_108</div>
<div class="tb" style="left:15px;top:280px"><div class="abs" style="left:38px;top:38px"><svg width="17" height="17" viewBox="0 0 17 17" style="display:block"><defs><linearGradient id="gCh" x1="0" y1="0" x2="0" y2="1"><stop offset="0" stop-color="#92b4e2"/><stop offset="1" stop-color="#5a92d4"/></linearGradient></defs><rect width="17" height="17" rx="2" fill="url(#gCh)"/><rect width="2" height="2" fill="#b030b0"/><rect x="15" width="2" height="2" fill="#b030b0"/><rect y="15" width="2" height="2" fill="#b030b0"/><rect x="15" y="15" width="2" height="2" fill="#b030b0"/><path d="M4.500 6.500l4 4 4-4" fill="none" stroke="#fff" stroke-width="2.400"/></svg></div></div>
<div class="tl" style="left:3px;top:380.5px">Bitmap_109</div>
<div class="tb" style="left:140px;top:280px"><div class="abs" style="left:38px;top:38px"><svg width="17" height="17" viewBox="0 0 17 17" style="display:block"><defs><linearGradient id="gCh" x1="0" y1="0" x2="0" y2="1"><stop offset="0" stop-color="#92b4e2"/><stop offset="1" stop-color="#5a92d4"/></linearGradient></defs><rect width="17" height="17" rx="2" fill="url(#gCh)"/><rect width="2" height="2" fill="#b030b0"/><rect x="15" width="2" height="2" fill="#b030b0"/><rect y="15" width="2" height="2" fill="#b030b0"/><rect x="15" y="15" width="2" height="2" fill="#b030b0"/><path d="M4.500 10.500l4-4 4 4" fill="none" stroke="#fff" stroke-width="2.400"/></svg></div></div>
<div class="tl" style="left:128px;top:380.5px">Bitmap_110</div>
<div class="tb" style="left:265px;top:280px"><div class="abs" style="left:44px;top:0px"><div style="width:5px;height:94px;background:linear-gradient(to bottom,#4a453c 0,#4e4940 25%,#a09c98 45%,#a8a4a0 50%,#5a554c 68%,#47423a 100%)"></div></div></div>
<div class="tl" style="left:253px;top:380.5px">Bitmap_111</div>
<div class="tb" style="left:390px;top:280px"><div class="abs" style="left:0px;top:0px"><svg width="94" height="94" viewBox="0 0 768 768" style="display:block"><defs><filter id="cb" x="-10%" y="-10%" width="120%" height="120%" color-interpolation-filters="sRGB"><feGaussianBlur stdDeviation="9"/><feColorMatrix values="1 0 0 0 0 0 1 0 0 0 0 0 1 0 0 0 0 0 14 -6"/><feGaussianBlur stdDeviation="3"/></filter></defs><rect width="768" height="768" fill="#050605"/><g fill="#46321a" filter="url(#cb)"><ellipse cx="120" cy="250" rx="125" ry="90"/><ellipse cx="530" cy="570" rx="95" ry="125"/><ellipse cx="640" cy="440" rx="48" ry="45"/><ellipse cx="720" cy="545" rx="32" ry="30"/><ellipse cx="450" cy="720" rx="42" ry="52"/><ellipse cx="180" cy="460" rx="42" ry="52"/><ellipse cx="540" cy="90" rx="52" ry="30"/><ellipse cx="330" cy="250" rx="40" ry="40"/></g><g fill="#405a2c" filter="url(#cb)"><ellipse cx="210" cy="150" rx="125" ry="72"/><ellipse cx="400" cy="130" rx="105" ry="68"/><ellipse cx="250" cy="35" rx="62" ry="38"/><ellipse cx="680" cy="20" rx="62" ry="30"/><ellipse cx="545" cy="290" rx="42" ry="48"/><ellipse cx="290" cy="480" rx="44" ry="100"/><ellipse cx="100" cy="610" rx="125" ry="100"/><ellipse cx="520" cy="440" rx="62" ry="42"/><ellipse cx="660" cy="640" rx="115" ry="72"/><ellipse cx="350" cy="720" rx="52" ry="48"/><ellipse cx="200" cy="740" rx="36" ry="30"/><ellipse cx="600" cy="560" rx="40" ry="30"/><ellipse cx="310" cy="100" rx="60" ry="50"/></g><g fill="#a28e66" filter="url(#cb)"><ellipse cx="55" cy="250" rx="62" ry="46"/><ellipse cx="170" cy="205" rx="34" ry="28"/><ellipse cx="260" cy="270" rx="52" ry="28"/><ellipse cx="190" cy="70" rx="30" ry="30"/><ellipse cx="330" cy="30" rx="66" ry="36"/><ellipse cx="470" cy="190" rx="72" ry="38"/><ellipse cx="545" cy="130" rx="30" ry="42"/><ellipse cx="510" cy="160" rx="40" ry="40"/><ellipse cx="660" cy="85" rx="46" ry="38"/><ellipse cx="735" cy="240" rx="40" ry="85"/><ellipse cx="700" cy="400" rx="78" ry="82"/><ellipse cx="690" cy="500" rx="62" ry="62"/><ellipse cx="720" cy="320" rx="50" ry="60"/><ellipse cx="70" cy="440" rx="82" ry="105"/><ellipse cx="350" cy="520" rx="27" ry="50"/><ellipse cx="437" cy="510" rx="25" ry="50"/><ellipse cx="260" cy="725" rx="62" ry="40"/><ellipse cx="400" cy="725" rx="24" ry="40"/><ellipse cx="190" cy="640" rx="17" ry="25"/><ellipse cx="565" cy="670" rx="15" ry="14"/><ellipse cx="280" cy="95" rx="26" ry="16"/><ellipse cx="757" cy="580" rx="12" ry="22"/><ellipse cx="300" cy="140" rx="18" ry="40"/></g><g fill="#050605" filter="url(#cb)"><ellipse cx="70" cy="55" rx="112" ry="72"/><ellipse cx="400" cy="350" rx="135" ry="105"/><ellipse cx="100" cy="350" rx="92" ry="40"/><ellipse cx="620" cy="200" rx="80" ry="150"/><ellipse cx="480" cy="35" rx="92" ry="34"/><ellipse cx="745" cy="100" rx="40" ry="72"/><ellipse cx="330" cy="620" rx="122" ry="55"/><ellipse cx="240" cy="560" rx="30" ry="80"/><ellipse cx="400" cy="565" rx="24" ry="70"/><ellipse cx="80" cy="735" rx="92" ry="36"/><ellipse cx="640" cy="745" rx="110" ry="30"/><ellipse cx="735" cy="685" rx="40" ry="38"/><ellipse cx="12" cy="285" rx="20" ry="30"/><ellipse cx="300" cy="400" rx="60" ry="40"/><ellipse cx="230" cy="330" rx="60" ry="40"/><ellipse cx="560" cy="380" rx="50" ry="40"/></g><g fill="#405a2c" filter="url(#cb)"><ellipse cx="545" cy="290" rx="38" ry="45"/></g><g fill="#46321a" filter="url(#cb)"><ellipse cx="65" cy="555" rx="22" ry="18"/><ellipse cx="645" cy="440" rx="36" ry="40"/><ellipse cx="722" cy="545" rx="28" ry="28"/></g><g fill="#8a8468" filter="url(#cb)"><ellipse cx="75" cy="60" rx="15" ry="15"/></g></svg></div></div>
<div class="tl" style="left:378px;top:380.5px">Bitmap_112</div>
<div class="tb" style="left:15px;top:419px;border-color:#fff"><div class="abs" style="left:0px;top:0px"><svg width="94" height="94" viewBox="0 0 768 768" style="display:block"><defs><filter id="cb2" x="-10%" y="-10%" width="120%" height="120%" color-interpolation-filters="sRGB"><feGaussianBlur stdDeviation="9"/><feColorMatrix values="1 0 0 0 0 0 1 0 0 0 0 0 1 0 0 0 0 0 14 -6"/><feGaussianBlur stdDeviation="3"/></filter></defs><rect width="768" height="768" fill="#050605"/><g fill="#46321a" filter="url(#cb2)"><ellipse cx="120" cy="250" rx="125" ry="90"/><ellipse cx="530" cy="570" rx="95" ry="125"/><ellipse cx="640" cy="440" rx="48" ry="45"/><ellipse cx="720" cy="545" rx="32" ry="30"/><ellipse cx="450" cy="720" rx="42" ry="52"/><ellipse cx="180" cy="460" rx="42" ry="52"/><ellipse cx="540" cy="90" rx="52" ry="30"/><ellipse cx="330" cy="250" rx="40" ry="40"/></g><g fill="#405a2c" filter="url(#cb2)"><ellipse cx="210" cy="150" rx="125" ry="72"/><ellipse cx="400" cy="130" rx="105" ry="68"/><ellipse cx="250" cy="35" rx="62" ry="38"/><ellipse cx="680" cy="20" rx="62" ry="30"/><ellipse cx="545" cy="290" rx="42" ry="48"/><ellipse cx="290" cy="480" rx="44" ry="100"/><ellipse cx="100" cy="610" rx="125" ry="100"/><ellipse cx="520" cy="440" rx="62" ry="42"/><ellipse cx="660" cy="640" rx="115" ry="72"/><ellipse cx="350" cy="720" rx="52" ry="48"/><ellipse cx="200" cy="740" rx="36" ry="30"/><ellipse cx="600" cy="560" rx="40" ry="30"/><ellipse cx="310" cy="100" rx="60" ry="50"/></g><g fill="#a28e66" filter="url(#cb2)"><ellipse cx="55" cy="250" rx="62" ry="46"/><ellipse cx="170" cy="205" rx="34" ry="28"/><ellipse cx="260" cy="270" rx="52" ry="28"/><ellipse cx="190" cy="70" rx="30" ry="30"/><ellipse cx="330" cy="30" rx="66" ry="36"/><ellipse cx="470" cy="190" rx="72" ry="38"/><ellipse cx="545" cy="130" rx="30" ry="42"/><ellipse cx="510" cy="160" rx="40" ry="40"/><ellipse cx="660" cy="85" rx="46" ry="38"/><ellipse cx="735" cy="240" rx="40" ry="85"/><ellipse cx="700" cy="400" rx="78" ry="82"/><ellipse cx="690" cy="500" rx="62" ry="62"/><ellipse cx="720" cy="320" rx="50" ry="60"/><ellipse cx="70" cy="440" rx="82" ry="105"/><ellipse cx="350" cy="520" rx="27" ry="50"/><ellipse cx="437" cy="510" rx="25" ry="50"/><ellipse cx="260" cy="725" rx="62" ry="40"/><ellipse cx="400" cy="725" rx="24" ry="40"/><ellipse cx="190" cy="640" rx="17" ry="25"/><ellipse cx="565" cy="670" rx="15" ry="14"/><ellipse cx="280" cy="95" rx="26" ry="16"/><ellipse cx="757" cy="580" rx="12" ry="22"/><ellipse cx="300" cy="140" rx="18" ry="40"/></g><g fill="#050605" filter="url(#cb2)"><ellipse cx="70" cy="55" rx="112" ry="72"/><ellipse cx="400" cy="350" rx="135" ry="105"/><ellipse cx="100" cy="350" rx="92" ry="40"/><ellipse cx="620" cy="200" rx="80" ry="150"/><ellipse cx="480" cy="35" rx="92" ry="34"/><ellipse cx="745" cy="100" rx="40" ry="72"/><ellipse cx="330" cy="620" rx="122" ry="55"/><ellipse cx="240" cy="560" rx="30" ry="80"/><ellipse cx="400" cy="565" rx="24" ry="70"/><ellipse cx="80" cy="735" rx="92" ry="36"/><ellipse cx="640" cy="745" rx="110" ry="30"/><ellipse cx="735" cy="685" rx="40" ry="38"/><ellipse cx="12" cy="285" rx="20" ry="30"/><ellipse cx="300" cy="400" rx="60" ry="40"/><ellipse cx="230" cy="330" rx="60" ry="40"/><ellipse cx="560" cy="380" rx="50" ry="40"/></g><g fill="#405a2c" filter="url(#cb2)"><ellipse cx="545" cy="290" rx="38" ry="45"/></g><g fill="#46321a" filter="url(#cb2)"><ellipse cx="65" cy="555" rx="22" ry="18"/><ellipse cx="645" cy="440" rx="36" ry="40"/><ellipse cx="722" cy="545" rx="28" ry="28"/></g><g fill="#8a8468" filter="url(#cb2)"><ellipse cx="75" cy="60" rx="15" ry="15"/></g></svg></div></div>
<div class="tb" style="left:140px;top:419px"><div class="abs" style="left:18px;top:18px"><div style="width:58px;height:58px;background:#000"></div></div></div>
<div class="tb" style="left:265px;top:419px"><div class="abs" style="left:23px;top:23px"><svg width="48" height="48" viewBox="0 0 48 48" style="display:block"><defs><radialGradient id="gCs" cx=".5" cy=".35" r=".8"><stop offset="0" stop-color="#d0301a"/><stop offset=".6" stop-color="#a81408"/><stop offset="1" stop-color="#6a0a04"/></radialGradient></defs><rect width="48" height="48" fill="url(#gCs)"/><g transform="translate(0,-2)"><path d="M4 52l2-26-1.500-3 1.500-8-1.500-3q2.500-5 5 0l-1.500 3 1.500 8-1.500 3 3 26Z" fill="#2a0c08"/><path d="M14 52l2-28-1-4q3-4 5 0l-1 4 2 28Z" fill="#8a5a28"/><path d="M22 52l1-19q-2-5 3-6q5 1 3 6l1 19Z" fill="#f0d8a0"/><path d="M33 52l3-20-2-4 2-8-2-3q3-5 7 0l-2 3 2 8-2 4 4 20Z" fill="#f4d078"/><path d="M37 9h2v5h-2Z" fill="#f4d078"/></g></svg></div></div>
<div class="tb" style="left:390px;top:419px"><div class="abs" style="left:18px;top:18px"><div style="width:58px;height:58px;background:#960000"></div></div></div>
<div class="abs" style="left:12px;top:0;width:102px;height:100px;border:3px solid #316ac5"></div>
<div class="abs" style="left:33px;top:103px;width:60px;height:14px;background:#316ac5;color:#fff;text-align:center;line-height:13px;white-space:nowrap">Bitmap_100</div>
<div class="abs" style="left:114px;top:86px;width:127px;height:50px;background:#000;opacity:.55;filter:blur(1px)"></div><div class="abs" style="left:111.500px;top:83.500px;width:127px;height:50px;background:#ffffe1;border:1px solid #000;line-height:13px;padding:4px 0 0 5px;white-space:nowrap">Dimensions: 1024 x 701<br>Type: Bitmap Image<br>Size: 2.05 MB</div>
<div class="abs" style="left:567px;top:0;width:17px;height:480px;background:linear-gradient(to right,#f3f1ec,#fefefb)"></div>
<div class="abs" style="left:569px;top:1px;width:14px;height:15px;background:linear-gradient(to bottom,#cbd8fa,#bccdf6);border:1px solid #e4ebfd;border-radius:2px"></div>
<svg class="abs" style="left:571px;top:5px" width="10" height="7" viewBox="0 0 10 7"><path d="M1 6l4-4 4 4" fill="none" stroke="#4d6185" stroke-width="2"/></svg>
<div class="abs" style="left:569px;top:17px;width:14px;height:194px;background:linear-gradient(to right,#c9d7fb,#bdcef8 60%,#b4c6f4);border:1px solid #e8eefd;border-radius:2px"></div>
<div class="abs" style="left:572px;top:110px;width:7px;height:8px;background:repeating-linear-gradient(to bottom,#eef3ff 0,#eef3ff 1px,#9eb4e6 1px,#9eb4e6 2px)"></div>
<div class="abs" style="left:569px;top:463px;width:14px;height:15px;background:linear-gradient(to bottom,#cbd8fa,#bccdf6);border:1px solid #e4ebfd;border-radius:2px"></div>
<svg class="abs" style="left:571px;top:468px" width="10" height="7" viewBox="0 0 10 7"><path d="M1 1l4 4 4-4" fill="none" stroke="#4d6185" stroke-width="2"/></svg>
</div>
  </div>
 </div>
 <div class="abs" style="left:0;top:766px;width:1024px;height:2px;background:#4686e6"></div>
</div>
</body>
</html>
